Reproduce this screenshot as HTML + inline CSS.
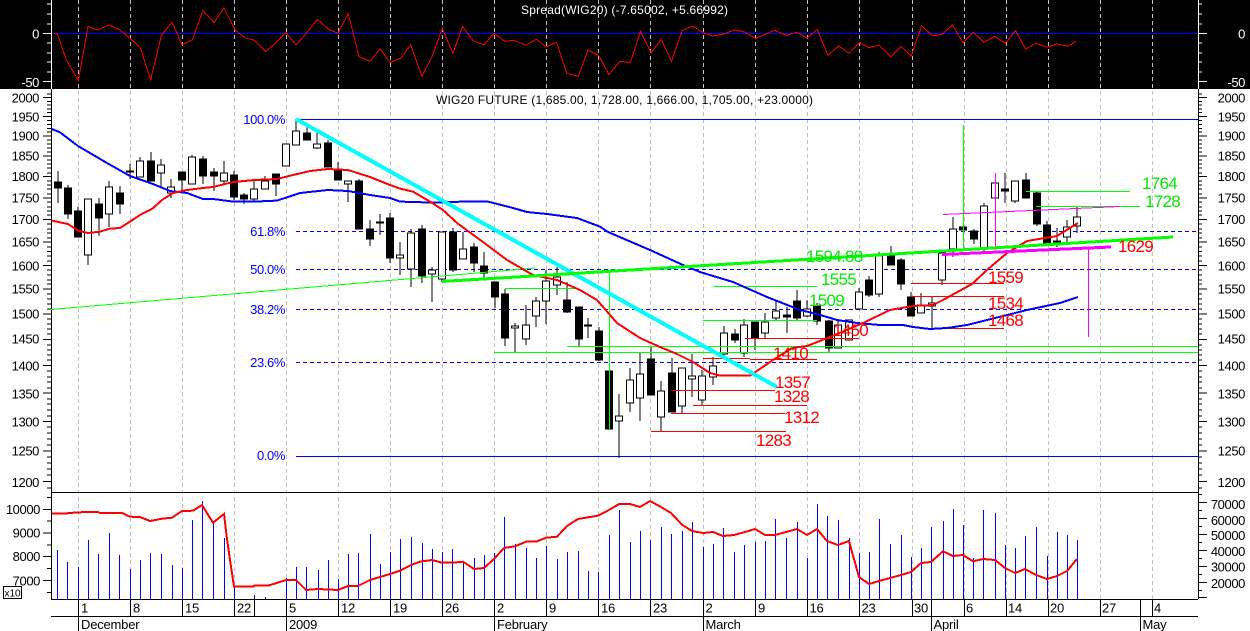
<!DOCTYPE html>
<html><head><meta charset="utf-8"><title>WIG20 FUTURE</title>
<style>
html,body{margin:0;padding:0;background:#fff;width:1250px;height:631px;overflow:hidden}
svg{display:block;font-family:"Liberation Sans",Arial,sans-serif;shape-rendering:crispEdges}
.ax{font-size:13px;letter-spacing:-.4px;text-anchor:end;fill:#000}
.axw{font-size:13px;letter-spacing:-.4px;text-anchor:end;fill:#fff}
.fib{font-size:13px;letter-spacing:-.4px;text-anchor:end;fill:#0000ff}
.d{font-size:13px;letter-spacing:-.2px;fill:#000}
.r{font-size:17px;letter-spacing:-.7px;fill:#ff0000}
.g{font-size:17px;letter-spacing:-.7px;fill:#00e800}
.t{font-size:12px}
</style></head><body>
<svg width="1250" height="631" viewBox="0 0 1250 631" xmlns="http://www.w3.org/2000/svg">
<rect x="0" y="0" width="1250" height="631" fill="#fff"/>
<rect x="0" y="0" width="1250" height="89" fill="#000"/>

<!-- grid -->
<path fill="none" stroke="#c0c0c0" stroke-width="1" stroke-dasharray="4 3" d="M78.5 0V599M130.5 0V599M182.5 0V599M234.5 0V599M286.5 0V599M338.5 0V599M390.5 0V599M442.5 0V599M494.5 0V599M546.5 0V599M598.5 0V599M650.5 0V599M703.5 0V599M755.5 0V599M807.5 0V599M859.5 0V599M912.5 0V599M964.5 0V599M1006.5 0V599M1048.5 0V599M1100.5 0V599M1152.5 0V599"/>

<!-- top panel -->
<path stroke="#0000ff" fill="none" d="M51 33.5H1198"/>
<path stroke="#fff" fill="none" d="M51.5 0V89M1198.5 0V89M43 33.5H51M43 81.5H51M47 4H51M47 14H51M47 24H51M47 43H51M47 53H51M47 62H51M47 72H51M1198 33.5H1207M1198 81.5H1207M1198 4H1202M1198 14H1202M1198 24H1202M1198 43H1202M1198 53H1202M1198 62H1202M1198 72H1202"/>
<polyline fill="none" stroke="#ff0000" stroke-width="1" points="54.5,33.5 57.7,34.5 66.4,60 78.3,80.5 88,26.5 97.6,30 109,25 120,30 130.4,38.5 140.3,47.5 150.6,80 161.3,35.5 172,22 182,45 192.5,39.5 202.8,10.5 214,22.5 224,8 235,30 245.4,38 253.8,40 265.6,51.6 276,42.6 285.8,32.6 296,45 305,35 317.4,19.3 328,29 338,33.3 348.2,13.3 359,56.6 370,61.3 380.2,48.6 390,62.6 400.8,58 410.7,45 422,76.3 432,56.6 442.3,28.6 453,53.3 462.5,26.3 473,40.6 484,45 494,33.3 504.7,41.3 514,40.3 525.7,45 536.4,39.3 546.2,47 556.5,42.3 566.8,73.3 578.3,76.3 588,50 599,56 609,74.6 620,61.3 630.4,62.6 640.5,31.3 651,52.6 661.4,39.3 671.4,61.3 682.2,30.6 692.7,26 703,32.6 713,36 723.6,34 734.5,30 744.5,32 755.3,38.3 765.4,34.3 774.6,30.3 786.3,35.3 796.7,32.3 807,38 817,29.3 828,55.3 838.5,46 849,53.3 859.4,42.6 869,47.6 879,45 890.7,56.6 901,46.3 911,56 921.6,26 933,36 942.5,34 952.5,25 963,42.6 973.4,32.3 984,42.3 994.7,36.3 1005.5,43.3 1015.6,30.6 1025.6,49.3 1035.7,43.3 1047,47.3 1057,44 1067.8,46.3 1076,41.3"/>
<text x="521" y="14" class="t" fill="#fff" textLength="207" lengthAdjust="spacing">Spread(WIG20) (-7.65002, +5.66992)</text>
<text x="39" y="38.5" class="axw">0</text><text x="39" y="87" class="axw">-50</text>
<text x="1245" y="38.5" class="axw">0</text><text x="1245" y="87" class="axw">-50</text>

<!-- main axis -->
<path stroke="#000" fill="none" d="M51.5 89V599M1198.5 89V599M51 492.5H1198M51 599.5H1198M51 616.5H1198
M43 97.5H51M43 116.5H51M43 136H51M43 156H51M43 176.5H51M43 198H51M43 219.5H51M43 242H51M43 265.5H51M43 289H51M43 314H51M43 339.5H51M43 365.5H51M43 393H51M43 421.5H51M43 451H51M43 481.5H51
M47 94H51M47 101.3H51M47 105H51M47 109H51M47 112.7H51M47 120.4H51M47 124.3H51M47 128.3H51M47 132.2H51M47 140H51M47 144H51M47 148H51M47 152H51M47 160H51M47 164H51M47 168H51M47 173H51M47 181H51M47 185H51M47 189H51M47 194H51M47 202H51M47 207H51M47 211H51M47 215H51M47 224H51M47 229H51M47 233H51M47 238H51M47 247H51M47 251.5H51M47 256H51M47 261H51M47 270H51M47 275H51M47 280H51M47 284H51M47 294H51M47 299H51M47 304H51M47 309H51M47 319H51M47 324H51M47 329H51M47 334H51M47 345H51M47 350H51M47 355H51M47 360H51M47 371H51M47 377H51M47 382H51M47 388H51M47 399H51M47 404H51M47 410H51M47 416H51M47 427H51M47 433H51M47 439H51M47 445H51M47 457H51M47 463H51M47 469H51M47 475H51M47 488H51
M1198 97.5H1207M1198 116.5H1207M1198 136H1207M1198 156H1207M1198 176.5H1207M1198 198H1207M1198 219.5H1207M1198 242H1207M1198 265.5H1207M1198 289H1207M1198 314H1207M1198 339.5H1207M1198 365.5H1207M1198 393H1207M1198 421.5H1207M1198 451H1207M1198 481.5H1207
M1198 94H1202M1198 101.3H1202M1198 105H1202M1198 109H1202M1198 112.7H1202M1198 120.4H1202M1198 124.3H1202M1198 128.3H1202M1198 132.2H1202M1198 140H1202M1198 144H1202M1198 148H1202M1198 152H1202M1198 160H1202M1198 164H1202M1198 168H1202M1198 173H1202M1198 181H1202M1198 185H1202M1198 189H1202M1198 194H1202M1198 202H1202M1198 207H1202M1198 211H1202M1198 215H1202M1198 224H1202M1198 229H1202M1198 233H1202M1198 238H1202M1198 247H1202M1198 251.5H1202M1198 256H1202M1198 261H1202M1198 270H1202M1198 275H1202M1198 280H1202M1198 284H1202M1198 294H1202M1198 299H1202M1198 304H1202M1198 309H1202M1198 319H1202M1198 324H1202M1198 329H1202M1198 334H1202M1198 345H1202M1198 350H1202M1198 355H1202M1198 360H1202M1198 371H1202M1198 377H1202M1198 382H1202M1198 388H1202M1198 399H1202M1198 404H1202M1198 410H1202M1198 416H1202M1198 427H1202M1198 433H1202M1198 439H1202M1198 445H1202M1198 457H1202M1198 463H1202M1198 469H1202M1198 475H1202M1198 488H1202
M43 509.5H51M43 533H51M43 556.5H51M43 580.5H51M47 497.5H51M47 521H51M47 545H51M47 568.5H51M47 592.5H51
M1198 502.5H1207M1198 518.5H1207M1198 534.5H1207M1198 550.5H1207M1198 566.5H1207M1198 582.5H1207M1198 597.5H1207M1198 494.5H1202M1198 510.5H1202M1198 526.5H1202M1198 542.5H1202M1198 558.5H1202M1198 574.5H1202M1198 590.5H1202
M78.5 599V631M130.5 599V616M182.5 599V616M234.5 599V616M254.5 599V616M286.5 599V631M338.5 599V616M390.5 599V616M442.5 599V616M494.5 599V631M546.5 599V616M598.5 599V616M650.5 599V616M703.5 599V631M755.5 599V616M807.5 599V616M859.5 599V616M912.5 599V616M931.5 599V631M964.5 599V616M1006.5 599V616M1048.5 599V616M1100.5 599V616M1140.5 599V631M1152.5 599V616"/>

<g class="lbl">
<text x="39" y="102.5" class="ax">2000</text><text x="39" y="121.5" class="ax">1950</text><text x="39" y="140.5" class="ax">1900</text><text x="39" y="160.5" class="ax">1850</text><text x="39" y="181" class="ax">1800</text><text x="39" y="202.5" class="ax">1750</text><text x="39" y="224" class="ax">1700</text><text x="39" y="246.5" class="ax">1650</text><text x="39" y="270.5" class="ax">1600</text><text x="39" y="293.5" class="ax">1550</text><text x="39" y="318.5" class="ax">1500</text><text x="39" y="343.5" class="ax">1450</text><text x="39" y="370.5" class="ax">1400</text><text x="39" y="398.5" class="ax">1350</text><text x="39" y="426.5" class="ax">1300</text><text x="39" y="455.5" class="ax">1250</text><text x="39" y="487" class="ax">1200</text>
<text x="1245" y="102.5" class="ax">2000</text><text x="1245" y="121.5" class="ax">1950</text><text x="1245" y="140.5" class="ax">1900</text><text x="1245" y="160.5" class="ax">1850</text><text x="1245" y="181" class="ax">1800</text><text x="1245" y="202.5" class="ax">1750</text><text x="1245" y="224" class="ax">1700</text><text x="1245" y="246.5" class="ax">1650</text><text x="1245" y="270.5" class="ax">1600</text><text x="1245" y="293.5" class="ax">1550</text><text x="1245" y="318.5" class="ax">1500</text><text x="1245" y="343.5" class="ax">1450</text><text x="1245" y="370.5" class="ax">1400</text><text x="1245" y="398.5" class="ax">1350</text><text x="1245" y="426.5" class="ax">1300</text><text x="1245" y="455.5" class="ax">1250</text><text x="1245" y="487" class="ax">1200</text>
<text x="40" y="514" class="ax">10000</text><text x="40" y="537.5" class="ax">9000</text><text x="40" y="561" class="ax">8000</text><text x="40" y="585.5" class="ax">7000</text>
<text x="1245" y="509" class="ax">70000</text><text x="1245" y="525" class="ax">60000</text><text x="1245" y="540" class="ax">50000</text><text x="1245" y="556" class="ax">40000</text><text x="1245" y="571.5" class="ax">30000</text><text x="1245" y="588" class="ax">20000</text>
</g>
<text x="436" y="104" class="t" fill="#000" textLength="377" lengthAdjust="spacing">WIG20 FUTURE (1,685.00, 1,728.00, 1,666.00, 1,705.00, +23.0000)</text>

<!-- fib -->
<path stroke="#0000ff" fill="none" d="M296 119.5H1198M296 456.5H1198"/>
<path stroke="#0000ff" fill="none" stroke-dasharray="4 3" d="M296 231.5H1198M296 269.5H1198M296 309.5H1198M296 362.5H1198"/>
<text x="285" y="124" class="fib">100.0%</text><text x="285" y="236" class="fib">61.8%</text><text x="285" y="274" class="fib">50.0%</text><text x="285" y="314" class="fib">38.2%</text><text x="285" y="367" class="fib">23.6%</text><text x="285" y="460" class="fib">0.0%</text>

<!-- volume -->
<path stroke="#0000ff" fill="none" d="M57.5 550V599M67.5 562V599M78.5 567V599M88.5 540V599M98.5 554V599M109.5 533V599M119.5 555V599M130.5 569V599M140.5 560V599M150.5 553V599M161.5 554V599M172.5 565V599M182.5 568V599M192.5 520V599M202.5 501V599M213.5 523V599M224.5 538V599M234.5 587V599M254.5 595V599M265.5 597V599M286.5 578V599M296.5 567V599M306.5 567V599M318.5 570V599M328.5 560V599M338.5 579V599M348.5 554V599M358.5 553V599M370.5 534V599M380.5 564V599M390.5 552V599M400.5 539V599M411.5 537V599M422.5 543V599M432.5 549V599M442.5 552V599M452.5 549V599M463.5 563V599M474.5 558V599M484.5 555V599M494.5 553V599M504.5 517V599M515.5 544V599M526.5 548V599M536.5 558V599M546.5 546V599M557.5 559V599M567.5 552V599M578.5 551V599M588.5 571V599M598.5 572V599M609.5 535V599M619.5 510V599M630.5 542V599M640.5 531V599M650.5 540V599M661.5 527V599M671.5 534V599M682.5 531V599M692.5 522V599M703.5 547V599M713.5 544V599M723.5 528V599M734.5 552V599M744.5 545V599M755.5 542V599M765.5 541V599M775.5 519V599M786.5 538V599M797.5 522V599M807.5 558V599M817.5 504V599M827.5 516V599M838.5 520V599M849.5 538V599M859.5 553V599M869.5 552V599M879.5 519V599M890.5 544V599M901.5 535V599M911.5 557V599M921.5 548V599M931.5 527V599M943.5 521V599M953.5 509V599M963.5 525V599M973.5 558V599M983.5 510V599M995.5 513V599M1005.5 545V599M1015.5 548V599M1025.5 536V599M1036.5 527V599M1047.5 556V599M1057.5 532V599M1067.5 535V599M1077.5 540V599"/>
<polyline fill="none" stroke="#ff0000" stroke-width="2" points="51.7,513.3 63,513.7 78,512.3 98,512 100,513 122,513 130,516.7 140,517 150,521 162,518.7 172,517.7 182,511 193,510.7 202,505 213,522.7 224,514 226.7,536.7 230,560 234,586.7 253,586.7 254,585.7 268,585.7 286,580 296,580 306,590 318,589 338,590 348,586 358,586 370,580 390,574 400,570.7 411,565 420,561.7 432,560 442,562.7 452,562.7 463,561.7 474,569 484,568 494,559 504,548 515,546.3 526,541.7 536,541.7 546,537.7 557,536.7 567,526 578,519 588,517.3 598,515.7 609,510 619,504 630,504 640,507 650,501 661,507 671,513 682,524.7 692,531 703,533 713,532 723,536 734,535 744,532.3 755,529 765,535 775,535 786,532 797,529 807,535 817,529 827,541 838,545 849,541 859,577 869,584 879,581 890,578 901,575 911,572 921,563 931,562 943,551.3 953,556 963,555 973,561.3 983,559 995,560 1005,568 1015,573 1025,569 1036,575 1047,579 1057,576 1067,571 1077,559"/>
<rect x="3.5" y="586.5" width="18" height="12" fill="#fff" stroke="#000"/>
<text x="4.5" y="596.5" font-size="10" fill="#000">x10</text>

<!-- date labels -->
<g class="dates">
<text x="81" y="612.5" class="d">1</text><text x="133" y="612.5" class="d">8</text><text x="185" y="612.5" class="d">15</text><text x="237" y="612.5" class="d">22</text><text x="289" y="612.5" class="d">5</text><text x="341" y="612.5" class="d">12</text><text x="393" y="612.5" class="d">19</text><text x="445" y="612.5" class="d">26</text><text x="497" y="612.5" class="d">2</text><text x="549" y="612.5" class="d">9</text><text x="601" y="612.5" class="d">16</text><text x="653" y="612.5" class="d">23</text><text x="705.5" y="612.5" class="d">2</text><text x="758" y="612.5" class="d">9</text><text x="809.5" y="612.5" class="d">16</text><text x="861.5" y="612.5" class="d">23</text><text x="914" y="612.5" class="d">30</text><text x="966" y="612.5" class="d">6</text><text x="1008" y="612.5" class="d">14</text><text x="1050" y="612.5" class="d">20</text><text x="1102" y="612.5" class="d">27</text><text x="1154" y="612.5" class="d">4</text>
<text x="81" y="629" class="d">December</text><text x="289" y="629" class="d">2009</text><text x="497" y="629" class="d">February</text><text x="705.5" y="629" class="d">March</text><text x="933.5" y="629" class="d">April</text><text x="1142.5" y="629" class="d">May</text>
</g>

<!-- candles: wicks -->
<path stroke="#000" fill="none" d="M58 171V203M68 185V219M78 207V237M88 199V265M99 198V236M109 181V227M120 186V214M130 164V179M140 157V177M151 152V181M161 159V187M171 179V198M182 172V190M192 155V184M203 156V184M214 168V191M224 161V184M234 171V200M244 193V204M254 180V202M265 176V189M276 174V196M286 144V166M296 119V145M307 127V140M317 133V149M328 140V167M338 162V180M348 181V202M359 179V229M370 220V246M380 214V235M390 213V263M400 242V275M411 229V287M422 225V283M432 267V302M442 232V282M453 228V272M463 232V259M474 243V272M484 252V278M495 282V308M505 289V346M515 323V352M526 305V345M536 297V327M546 270V324M557 267V295M567 282V313M579 307V346M588 318V338M599 327V361M609 371V429M619 394V458M630 368V412M640 353V421M651 347V395M661 381V431M672 358V412M682 368V413M692 354V397M702 370V405M713 357V385M724 326V356M735 329V343M744 319V357M755 322V350M765 313V338M776 301V320M787 307V333M797 290V320M807 300V317M817 303V325M829 320V352M838 320V348M849 320V340M859 288V310M869 276V297M879 252V297M891 246V265M901 258V290M911 292V316M921 293V313M932 297V328M942 253V285M953 217V257M963 227V230M974 229V244M984 203V252M1005 173V203M1015 181V203M1026 173V198M1037 192V226M1047 221V244M1057 228V247M1067 220V243M1077 207V233"/>
<!-- black bodies -->
<path stroke="#000" fill="#000" d="M54.5 182h7V188h-7zM64.5 188h7V214h-7zM74.5 211h7V237h-7zM95.5 204h7V218h-7zM116.5 193h7V204h-7zM147.5 161h7V181h-7zM178.5 172h7V180h-7zM199.5 159h7V176h-7zM210.5 172h7V176h-7zM230.5 175h7V197h-7zM240.5 195h7V199h-7zM272.5 174h7V184h-7zM303.5 133h7V140h-7zM324.5 143h7V167h-7zM334.5 170h7V180h-7zM355.5 181h7V229h-7zM366.5 229h7V239h-7zM376.5 222h7V223h-7zM386.5 218h7V258h-7zM418.5 229h7V276h-7zM449.5 232h7V270h-7zM470.5 247h7V263h-7zM480.5 266h7V273h-7zM491.5 282h7V297h-7zM501.5 294h7V338h-7zM563.5 300h7V312h-7zM575.5 307h7V339h-7zM584.5 325h7V326h-7zM595.5 331h7V360h-7zM605.5 371h7V429h-7zM647.5 359h7V395h-7zM668.5 373h7V412h-7zM731.5 334h7V340h-7zM751.5 322h7V338h-7zM783.5 315h7V317h-7zM793.5 301h7V318h-7zM813.5 306h7V321h-7zM825.5 321h7V348h-7zM865.5 280h7V295h-7zM887.5 256h7V265h-7zM897.5 260h7V284h-7zM907.5 297h7V316h-7zM959.5 227h7V230h-7zM970.5 231h7V239h-7zM1001.5 189h7V191h-7zM1022.5 180h7V198h-7zM1033.5 193h7V224h-7zM1043.5 225h7V243h-7z"/>
<!-- white bodies -->
<path stroke="#000" fill="#fff" d="M84.5 199h7V255h-7zM105.5 187h7V214h-7zM126.5 171h7V172h-7zM136.5 161h7V177h-7zM157.5 165h7V173h-7zM167.5 187h7V193h-7zM188.5 157h7V184h-7zM220.5 173h7V181h-7zM250.5 189h7V199h-7zM261.5 181h7V189h-7zM282.5 144h7V166h-7zM292.5 131h7V145h-7zM313.5 144h7V148h-7zM344.5 181h7V184h-7zM396.5 255h7V258h-7zM407.5 233h7V269h-7zM428.5 270h7V274h-7zM438.5 232h7V279h-7zM459.5 249h7V259h-7zM511.5 326h7V328h-7zM522.5 325h7V339h-7zM532.5 301h7V316h-7zM542.5 281h7V301h-7zM553.5 277h7V285h-7zM615.5 416h7V421h-7zM626.5 380h7V403h-7zM636.5 374h7V398h-7zM657.5 391h7V417h-7zM678.5 368h7V406h-7zM688.5 376h7V379h-7zM698.5 376h7V400h-7zM709.5 366h7V377h-7zM720.5 333h7V354h-7zM740.5 325h7V353h-7zM761.5 322h7V333h-7zM772.5 311h7V318h-7zM803.5 309h7V316h-7zM834.5 325h7V348h-7zM845.5 320h7V340h-7zM855.5 292h7V309h-7zM875.5 256h7V294h-7zM917.5 305h7V313h-7zM928.5 303h7V306h-7zM938.5 253h7V280h-7zM949.5 229h7V249h-7zM980.5 206h7V248h-7zM991.5 183h7V198h-7zM1011.5 181h7V201h-7zM1053.5 241h7V242h-7zM1063.5 227h7V237h-7zM1073.5 217h7V226h-7z"/>

<!-- thin green -->
<path stroke="#00ff00" fill="none" d="M51 309.5L535 268M505 288.5H577M713 286.5H817M703 320.5H817M567 346.5H1198M494 352.5H1198M609.5 270V429M963.5 125V248M1026 191.5H1130M1036 206.5H1140"/>
<!-- thin magenta -->
<path stroke="#ff00ff" fill="none" d="M943 214.5L1120 206.5M995.5 173V250M1088.5 247V337"/>
<!-- thin red -->
<path stroke="#ff0000" fill="none" d="M651 431.5H786M671 413.5H785M693 405.5H807M671 390.5H775M703 358.5H750M750 359.5H817M745 338.5H859M911 283.5H1004M911 296.5H1004M921 328.5H1004"/>

<!-- MAs -->
<polyline fill="none" stroke="#0000ff" stroke-width="2" points="51.7,129 60,132.3 78,146 107,163 130,176 153,184 170,191 187,193 203,199 213,199 233,201.6 255,201.6 277,200.6 300,193 328,190 348,191 370,195 390,198 400,201.6 433,202.6 463,201.6 488,201.6 513,208 527,212 547,214 577,218 600,226.6 608,232 650,250 683,265 700,272 733,282 767,297 800,310 817,314 837,320 857,323 880,325 903,325 913,327 930,329 947,328 967,325 987,320 1027,310 1060,303 1078,297"/>
<polyline fill="none" stroke="#ff0000" stroke-width="2" points="51.7,220.6 68,224 78,230.6 88,233 100,231.6 110,228.6 120,228 130,221.6 140,215 152,209 162,200 173,193 187,190 203,188 213,187 233,182 255,180 277,179 293,175 310,171 328,169 348,170 370,177 390,185 400,188.6 413,191.6 430,201.6 443,210 457,223 483,242 507,260 533,275 557,280 580,290 597,300 617,323 640,338 660,347 677,354 693,362 710,373 720,375.6 750,375.6 773,360 792,348 807,346 830,337 863,323 890,310 913,306 933,305 943,300 972,284 987,270 1007,253 1027,241 1057,236 1078,223"/>

<!-- thick trend lines -->
<line x1="296" y1="119" x2="777" y2="387" stroke="#00ffff" stroke-width="4"/>
<line x1="442" y1="281.5" x2="1173" y2="237" stroke="#00ff00" stroke-width="3"/>
<line x1="942" y1="254.5" x2="1111" y2="247" stroke="#ff00ff" stroke-width="3"/>

<!-- value labels -->
<text x="775" y="388" class="r">1357</text><text x="774" y="402" class="r">1328</text><text x="784" y="423" class="r">1312</text><text x="756" y="446" class="r">1283</text><text x="773" y="359" class="r">1410</text><text x="833" y="336" class="r">1450</text><text x="988" y="283" class="r">1559</text><text x="988" y="309" class="r">1534</text><text x="988" y="326" class="r">1468</text><text x="1118" y="252" class="r">1629</text>
<text x="1142" y="189" class="g">1764</text><text x="1145" y="207" class="g">1728</text><text x="806" y="262" class="g">1594.88</text><text x="821" y="285" class="g">1555</text><text x="809" y="306" class="g">1509</text>
</svg>
</body></html>
